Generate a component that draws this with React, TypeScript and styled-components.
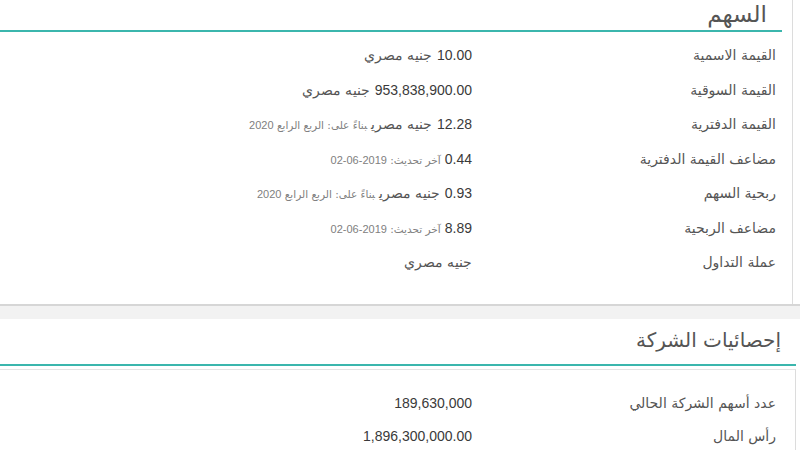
import React from "react";
import styled, { createGlobalStyle } from "styled-components";

const Global = createGlobalStyle`
  html, body { margin: 0; padding: 0; background: #ffffff; }
  body { font-family: "DejaVu Sans", "Noto Sans", sans-serif; }
`;

const Page = styled.div`
  width: 800px;
  height: 450px;
  overflow: hidden;
  direction: rtl;
  background: #ffffff;
`;

const Card = styled.section`
  width: 793px;
  margin-right: auto;
  margin-left: 0;
  box-sizing: border-box;
  background: #fff;
  border-right: 1px solid #dcdcdc;
  padding: 0 10px 24px 0;
`;

const CardTitle = styled.h2`
  margin: 0;
  height: 32px;
  display: flex;
  align-items: flex-end;
  padding: 0 15px 4px 0;
  box-sizing: border-box;
  font-family: "DejaVu Sans", sans-serif;
  font-weight: normal;
  font-size: 23px;
  color: #555;
  line-height: 1;
  border-bottom: 2px solid #3bb6ad;
`;

const Rows = styled.div<{ $top: number }>`
  padding-top: ${(p) => p.$top}px;
  display: flex;
  flex-direction: column;
`;

const Row = styled.div<{ $h: number }>`
  display: grid;
  grid-template-columns: 305px 1fr;
  height: ${(p) => p.$h}px;
  align-items: center;
`;

const Label = styled.div`
  padding-right: 6px;
  font-size: 14px;
  color: #555;
  white-space: nowrap;
`;

const Value = styled.div`
  padding-right: 5px;
  font-size: 14px;
  color: #3a3a3a;
  white-space: nowrap;
`;

const Num = styled.span`
  font-family: "Liberation Sans", sans-serif;
  font-size: 14px;
`;

const Unit = styled.span`
  font-family: "DejaVu Sans", sans-serif;
  font-size: 13.5px;
  font-weight: 300;
  color: #555;
`;

const Note = styled.span`
  font-family: "DejaVu Sans", sans-serif;
  font-size: 10.5px;
  color: #808080;
  margin-right: 4px;
`;

const NoteNum = styled.span`
  font-family: "Liberation Sans", sans-serif;
  font-size: 11px;
`;

const Gap = styled.div`
  height: 13px;
  background: #f2f2f2;
  border-top: 2px solid #d6d6d6;
`;

const Section2Head = styled.h2`
  margin: 0 auto 0 0;
  width: 796px;
  box-sizing: border-box;
  height: 47px;
  display: flex;
  align-items: center;
  padding: 0 15px 2px 0;
  font-family: "DejaVu Sans", sans-serif;
  font-weight: normal;
  font-size: 20px;
  color: #555;
  border-bottom: 2px solid #3bb6ad;
`;

const Card2 = styled.section`
  margin: 3px auto 0 0;
  width: 796px;
  box-sizing: border-box;
  border-top: 1px solid #e4e4e4;
  border-right: 1px solid #dcdcdc;
  padding: 17px 13px 0 0;
`;

type Item = { label: string; num?: string; unit?: string; noteText?: string; noteNum?: string };

const shares: Item[] = [
  { label: "القيمة الاسمية", num: "10.00", unit: "جنيه مصري" },
  { label: "القيمة السوقية", num: "953,838,900.00", unit: "جنيه مصري" },
  { label: "القيمة الدفترية", num: "12.28", unit: "جنيه مصري", noteText: "بناءً على: الربع الرابع", noteNum: "2020" },
  { label: "مضاعف القيمة الدفترية", num: "0.44", noteText: "آخر تحديث:", noteNum: "2019-06-02" },
  { label: "ربحية السهم", num: "0.93", unit: "جنيه مصري", noteText: "بناءً على: الربع الرابع", noteNum: "2020" },
  { label: "مضاعف الربحية", num: "8.89", noteText: "آخر تحديث:", noteNum: "2019-06-02" },
  { label: "عملة التداول", unit: "جنيه مصري" },
];

const stats: Item[] = [
  { label: "عدد أسهم الشركة الحالي", num: "189,630,000" },
  { label: "رأس المال", num: "1,896,300,000.00" },
];

function ValueCell({ item }: { item: Item }) {
  return (
    <Value>
      {item.num && <Num>{item.num}</Num>}
      {item.num && item.unit && " "}
      {item.unit && <Unit>{item.unit}</Unit>}
      {item.noteText && (
        <Note>
          {item.noteText} <NoteNum>{item.noteNum}</NoteNum>
        </Note>
      )}
    </Value>
  );
}

export default function App() {
  return (
    <Page>
      <Global />
      <Card>
        <CardTitle>السهم</CardTitle>
        <Rows $top={6}>
          {shares.map((s) => (
            <Row key={s.label} $h={34.5}>
              <Label>{s.label}</Label>
              <ValueCell item={s} />
            </Row>
          ))}
        </Rows>
      </Card>
      <Gap />
      <Section2Head>إحصائيات الشركة</Section2Head>
      <Card2>
        <Rows $top={0}>
          {stats.map((s) => (
            <Row key={s.label} $h={33}>
              <Label>{s.label}</Label>
              <ValueCell item={s} />
            </Row>
          ))}
        </Rows>
      </Card2>
    </Page>
  );
}
